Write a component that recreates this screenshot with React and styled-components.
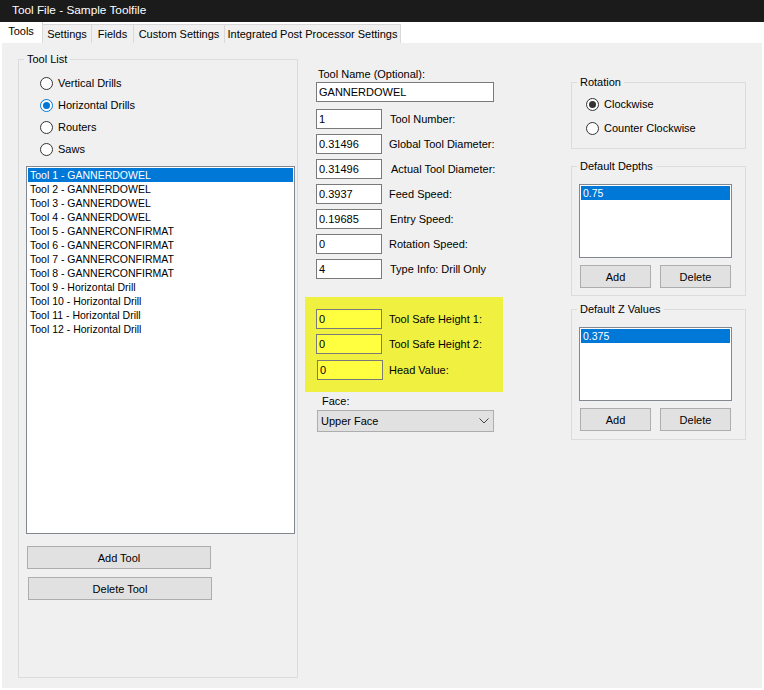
import React from "react";
import styled, { createGlobalStyle } from "styled-components";

const Global = createGlobalStyle`
  html, body { margin: 0; padding: 0; background: #ffffff; }
  body {
    font-family: "Liberation Sans", Arial, sans-serif;
    font-size: 11px;
    color: #000;
    width: 764px;
    height: 690px;
    overflow: hidden;
  }
  * { box-sizing: border-box; }
`;

const Window = styled.div`
  width: 764px;
  height: 690px;
  display: flex;
  flex-direction: column;
  background: #ffffff;
`;

const TitleBar = styled.div`
  height: 22px;
  background: #1b1b1b;
  color: #ffffff;
  font-size: 11.8px;
  padding-left: 12px;
  display: flex;
  align-items: center;
  padding-bottom: 3px;
`;

const TabStrip = styled.div`
  height: 21px;
  display: flex;
  align-items: flex-end;
  background: #ffffff;
`;

const Tab = styled.div`
  width: ${(p) => p.$w}px;
  height: ${(p) => (p.$active ? 21 : 19)}px;
  background: ${(p) => (p.$active ? "#ffffff" : "#f0f0f0")};
  border-right: 1px solid #d9d9d9;
  border-top: ${(p) => (p.$active ? "none" : "1px solid #d9d9d9")};
  display: flex;
  align-items: center;
  justify-content: center;
  padding-bottom: ${(p) => (p.$active ? 3 : 1)}px;
  font-size: 11px;
  white-space: nowrap;
`;

const Panel = styled.div`
  margin: 0 2px;
  height: 645px;
  background: #f0f0f0;
  display: flex;
  align-items: flex-start;
  padding: 10px 0 0 16px;
`;

const GroupBox = styled.fieldset`
  margin: ${(p) => p.$mt || 0}px 0 0 0;
  padding: 0;
  width: ${(p) => p.$w}px;
  height: ${(p) => p.$h}px;
  border: 1px solid #dcdcdc;
  min-width: 0;
  display: flex;
  flex-direction: column;
  align-items: flex-start;
`;

const Legend = styled.legend`
  margin-left: 5px;
  padding: 0 3px 0 3px;
  line-height: 12px;
  height: 12px;
  font-size: 11px;
`;

const RadioGroup = styled.div`
  display: flex;
  flex-direction: column;
  padding: ${(p) => p.$pt}px 0 0 ${(p) => p.$pl}px;
`;

const RadioRow = styled.label`
  height: ${(p) => p.$h}px;
  display: flex;
  align-items: center;
  gap: 5px;
`;

const RadioCircle = styled.span`
  width: 13px;
  height: 13px;
  border-radius: 50%;
  background: #ffffff;
  border: 1px solid ${(p) => (p.$focus ? "#0078d7" : "#333333")};
  display: flex;
  align-items: center;
  justify-content: center;
  flex: none;
  &::after {
    content: "";
    width: 7px;
    height: 7px;
    border-radius: 50%;
    background: ${(p) => (p.$focus ? "#0078d7" : "#333333")};
    display: ${(p) => (p.$checked ? "block" : "none")};
  }
`;

const ListBox = styled.div`
  margin: ${(p) => p.$mt}px 0 0 ${(p) => p.$ml}px;
  width: ${(p) => p.$w}px;
  height: ${(p) => p.$h}px;
  background: #ffffff;
  border: 1px solid #828790;
  padding: 1px;
  flex: none;
`;

const ListItem = styled.div`
  height: 14px;
  line-height: 14px;
  padding-left: 2px;
  font-size: 10.5px;
  white-space: nowrap;
  background: ${(p) => (p.$sel ? "#0078d7" : "transparent")};
  color: ${(p) => (p.$sel ? "#ffffff" : "#000000")};
`;

const Button = styled.div`
  margin: ${(p) => p.$mt || 0}px 0 0 ${(p) => p.$ml || 0}px;
  width: ${(p) => p.$w}px;
  height: 23px;
  background: #e1e1e1;
  border: 1px solid #adadad;
  display: flex;
  align-items: center;
  justify-content: center;
  flex: none;
`;

const ButtonRow = styled.div`
  display: flex;
  gap: 9px;
  margin: 7px 0 0 8px;
`;

const MiddleColumn = styled.div`
  width: 198px;
  margin-left: 7px;
  display: flex;
  flex-direction: column;
  align-items: flex-start;
`;

const FieldLabel = styled.div`
  height: 13px;
  line-height: 13px;
  margin: ${(p) => p.$mt}px 0 0 ${(p) => p.$ml}px;
`;

const TextBox = styled.input`
  width: ${(p) => p.$w}px;
  height: 20px;
  border: 1px solid #7a7a7a;
  background: ${(p) => (p.$yellow ? "#ffff40" : "#ffffff")};
  font: inherit;
  font-size: 11px;
  color: #000;
  padding: 0 2px;
  margin: 0;
  outline: none;
  flex: none;
`;

const NameBox = styled(TextBox)`
  margin: 1px 0 0 11px;
`;

const FieldRows = styled.div`
  display: flex;
  flex-direction: column;
  gap: 5px;
  margin: ${(p) => p.$mt}px 0 0 0;
  padding-left: ${(p) => p.$pl}px;
`;

const FieldRow = styled.div`
  display: flex;
  align-items: center;
  height: 20px;
  margin-top: ${(p) => p.$mt || 0}px;
  margin-left: ${(p) => p.$shift || 0}px;
`;

const RowLabel = styled.span`
  margin-left: ${(p) => p.$ml}px;
  white-space: nowrap;
`;

const Highlight = styled.div`
  margin-top: 18px;
  width: 198px;
  height: 95px;
  background: #f0f040;
  padding-top: 12px;
`;

const Combo = styled.div`
  margin: 2px 0 0 12px;
  width: 177px;
  height: 22px;
  background: #e1e1e1;
  border: 1px solid #adadad;
  display: flex;
  align-items: center;
  justify-content: space-between;
  padding: 0 4px 0 3px;
`;

const RightColumn = styled.div`
  width: 175px;
  margin-left: 68px;
  display: flex;
  flex-direction: column;
`;

const Chevron = () => (
  <svg width="10" height="6" viewBox="0 0 10 6">
    <polyline points="0.5,0.5 5,5 9.5,0.5" fill="none" stroke="#444" strokeWidth="1" />
  </svg>
);

const tools = [
  "Tool 1 - GANNERDOWEL",
  "Tool 2 - GANNERDOWEL",
  "Tool 3 - GANNERDOWEL",
  "Tool 4 - GANNERDOWEL",
  "Tool 5 - GANNERCONFIRMAT",
  "Tool 6 - GANNERCONFIRMAT",
  "Tool 7 - GANNERCONFIRMAT",
  "Tool 8 - GANNERCONFIRMAT",
  "Tool 9 - Horizontal Drill",
  "Tool 10 - Horizontal Drill",
  "Tool 11 - Horizontal Drill",
  "Tool 12 - Horizontal Drill",
];

const fields = [
  { v: "1", l: "Tool Number:", ml: 8 },
  { v: "0.31496", l: "Global Tool Diameter:", ml: 7 },
  { v: "0.31496", l: "Actual Tool Diameter:", ml: 9 },
  { v: "0.3937", l: "Feed Speed:", ml: 7 },
  { v: "0.19685", l: "Entry Speed:", ml: 8 },
  { v: "0", l: "Rotation Speed:", ml: 7 },
  { v: "4", l: "Type Info: Drill Only", ml: 8 },
];

const tabs = [
  { t: "Tools", w: 43, a: true },
  { t: "Settings", w: 49 },
  { t: "Fields", w: 42 },
  { t: "Custom Settings", w: 91 },
  { t: "Integrated Post Processor Settings", w: 176 },
];

export default function App() {
  return (
    <Window>
      <Global />
      <TitleBar>Tool File - Sample Toolfile</TitleBar>
      <TabStrip>
        {tabs.map((t) => (
          <Tab key={t.t} $w={t.w} $active={t.a}>
            {t.t}
          </Tab>
        ))}
      </TabStrip>
      <Panel>
        <GroupBox $w={280} $h={625}>
          <Legend>Tool List</Legend>
          <RadioGroup $pt={7} $pl={21}>
            <RadioRow $h={22}>
              <RadioCircle />
              Vertical Drills
            </RadioRow>
            <RadioRow $h={22}>
              <RadioCircle $checked $focus />
              Horizontal Drills
            </RadioRow>
            <RadioRow $h={22}>
              <RadioCircle />
              Routers
            </RadioRow>
            <RadioRow $h={22}>
              <RadioCircle />
              Saws
            </RadioRow>
          </RadioGroup>
          <ListBox $mt={6} $ml={7} $w={269} $h={368}>
            {tools.map((t, i) => (
              <ListItem key={t} $sel={i === 0}>
                {t}
              </ListItem>
            ))}
          </ListBox>
          <Button $mt={12} $ml={8} $w={184}>Add Tool</Button>
          <Button $mt={8} $ml={9} $w={184}>Delete Tool</Button>
        </GroupBox>

        <MiddleColumn>
          <FieldLabel $mt={15} $ml={13}>Tool Name (Optional):</FieldLabel>
          <NameBox $w={178} readOnly value="GANNERDOWEL" />
          <FieldRows $mt={7} $pl={11}>
            {fields.map((f) => (
              <FieldRow key={f.l}>
                <TextBox $w={66} readOnly value={f.v} />
                <RowLabel $ml={f.ml}>{f.l}</RowLabel>
              </FieldRow>
            ))}
          </FieldRows>
          <Highlight>
            <FieldRows $mt={0} $pl={11}>
              <FieldRow>
                <TextBox $w={66} $yellow readOnly value="0" />
                <RowLabel $ml={7}>Tool Safe Height 1:</RowLabel>
              </FieldRow>
              <FieldRow>
                <TextBox $w={66} $yellow readOnly value="0" />
                <RowLabel $ml={7}>Tool Safe Height 2:</RowLabel>
              </FieldRow>
              <FieldRow $mt={1} $shift={1}>
                <TextBox $w={66} $yellow readOnly value="0" />
                <RowLabel $ml={6}>Head Value:</RowLabel>
              </FieldRow>
            </FieldRows>
          </Highlight>
          <FieldLabel $mt={3} $ml={17}>Face:</FieldLabel>
          <Combo>
            <span>Upper Face</span>
            <Chevron />
          </Combo>
        </MiddleColumn>

        <RightColumn>
          <GroupBox $w={175} $h={73} $mt={23}>
            <Legend>Rotation</Legend>
            <RadioGroup $pt={4} $pl={14}>
              <RadioRow $h={24}>
                <RadioCircle $checked />
                Clockwise
              </RadioRow>
              <RadioRow $h={24}>
                <RadioCircle />
                Counter Clockwise
              </RadioRow>
            </RadioGroup>
          </GroupBox>
          <GroupBox $w={175} $h={136} $mt={11}>
            <Legend>Default Depths</Legend>
            <ListBox $mt={12} $ml={7} $w={153} $h={74}>
              <ListItem $sel>0.75</ListItem>
            </ListBox>
            <ButtonRow>
              <Button $w={71}>Add</Button>
              <Button $w={71}>Delete</Button>
            </ButtonRow>
          </GroupBox>
          <GroupBox $w={175} $h={137} $mt={7}>
            <Legend>Default Z Values</Legend>
            <ListBox $mt={12} $ml={7} $w={153} $h={74}>
              <ListItem $sel>0.375</ListItem>
            </ListBox>
            <ButtonRow>
              <Button $w={71}>Add</Button>
              <Button $w={71}>Delete</Button>
            </ButtonRow>
          </GroupBox>
        </RightColumn>
      </Panel>
    </Window>
  );
}
